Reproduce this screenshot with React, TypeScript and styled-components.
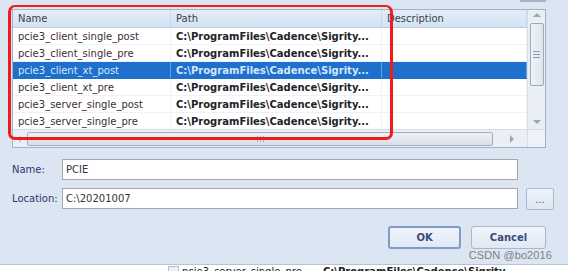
import React from 'react';
import styled, { createGlobalStyle } from 'styled-components';

const GlobalStyle = createGlobalStyle`
  html, body {
    margin: 0;
    padding: 0;
    background: #ffffff;
    overflow: hidden;
  }
  body {
    font-family: "DejaVu Sans", Tahoma, sans-serif;
  }
`;

const Screen = styled.div`
  width: 568px;
  height: 271px;
  overflow: hidden;
  display: flex;
  flex-direction: column;
`;

const Dialog = styled.div`
  position: relative;
  height: 265px;
  flex-shrink: 0;
  background: #dce6f2;
  border-bottom: 1px solid #b4c3d6;
  box-sizing: border-box;
  padding: 0 22px 0 12px;
  display: flex;
  flex-direction: column;
`;

const TopStrip = styled.div`
  height: 9px;
  display: flex;
  justify-content: flex-end;
`;

const TopButtonEdge = styled.div`
  width: 26px;
  height: 2px;
  background: #a9b2bf;
`;

const ListBox = styled.div`
  height: 139px;
  border: 1px solid #9fb3ca;
  box-sizing: border-box;
  background: #ffffff;
  display: grid;
  grid-template-columns: 1fr 18px;
  grid-template-rows: 1fr 18px;
`;

const Table = styled.div`
  display: flex;
  flex-direction: column;
  overflow: hidden;
`;

const Row = styled.div<{ $header?: boolean; $selected?: boolean }>`
  display: grid;
  grid-template-columns: 158px 211px 1fr;
  height: ${({ $header }) => ($header ? '18px' : '17px')};
  box-sizing: border-box;
  flex-shrink: 0;
  background: ${({ $header, $selected }) =>
    $header
      ? 'linear-gradient(#e3edf8, #d4e2f3)'
      : $selected
      ? '#1f6fcd'
      : '#ffffff'};
  border-bottom: 1px solid
    ${({ $header, $selected }) =>
      $header ? '#bccbdd' : $selected ? '#1f6fcd' : '#eef1f5'};
`;

const Cell = styled.div<{ $bold?: boolean; $header?: boolean; $selected?: boolean }>`
  display: flex;
  align-items: center;
  padding-left: 5px;
  font-size: 10px;
  font-weight: ${({ $bold }) => ($bold ? 700 : 400)};
  white-space: nowrap;
  overflow: hidden;
  color: ${({ $header, $selected, $bold }) =>
    $selected ? '#d6e6fa' : $header ? '#3b3f4c' : $bold ? '#222226' : '#3d2e35'};
  border-right: 1px solid
    ${({ $header, $selected }) =>
      $header ? '#c6d5e7' : $selected ? '#6e9fdc' : '#f1f3f6'};
`;

const VScroll = styled.div`
  background: #eaeff6;
  border-left: 1px solid #d3dce8;
  display: flex;
  flex-direction: column;
  align-items: center;
  padding-top: 3px;
  padding-bottom: 5px;
`;

const HScroll = styled.div`
  background: #eaeff6;
  border-top: 1px solid #d3dce8;
  display: flex;
  align-items: center;
  padding: 0 2px 0 4px;
  gap: 6px;
`;

const Corner = styled.div`
  background: #eef2f7;
  border-top: 1px solid #d3dce8;
  border-left: 1px solid #d3dce8;
`;

const Arrow = styled.div<{ $dir: 'up' | 'down' | 'left' | 'right' }>`
  width: 0;
  height: 0;
  flex-shrink: 0;
  border: 4px solid transparent;
  ${({ $dir }) =>
    $dir === 'up'
      ? 'border-bottom-color: #98a6b8; border-top-width: 0;'
      : $dir === 'down'
      ? 'border-top-color: #98a6b8; border-bottom-width: 0;'
      : $dir === 'left'
      ? 'border-right-color: #c0c8d2; border-left-width: 0;'
      : 'border-left-color: #98a6b8; border-right-width: 0;'}
`;

const VThumb = styled.div`
  width: 14px;
  height: 63px;
  margin-top: 6px;
  box-sizing: border-box;
  border: 1px solid #9eabbb;
  border-radius: 2px;
  background: linear-gradient(90deg, #f1f4f8, #dfe5ed);
  display: flex;
  flex-direction: column;
  align-items: center;
  justify-content: center;
  gap: 2px;
`;

const VGrip = styled.div`
  width: 7px;
  height: 1px;
  background: #8d9aab;
`;

const VSpacer = styled.div`
  flex: 1;
`;

const HThumb = styled.div`
  flex: 1;
  height: 14px;
  box-sizing: border-box;
  border: 1px solid #a2aebd;
  border-radius: 2px;
  background: linear-gradient(#eef1f5, #d9dfe7);
  display: flex;
  align-items: center;
  justify-content: center;
  gap: 2px;
`;

const HGrip = styled.div`
  width: 1px;
  height: 6px;
  background: #a5b0bd;
`;

const HTrackEnd = styled.div`
  width: 26px;
  display: flex;
  justify-content: center;
`;

const Fields = styled.div`
  margin-top: 11px;
  display: grid;
  grid-template-columns: 50px 448px 28px;
  column-gap: 8px;
  row-gap: 7px;
  align-items: center;
`;

const Label = styled.label`
  font-size: 10px;
  color: #2b3873;
  margin-right: -8px;
`;

const Input = styled.div`
  height: 21px;
  box-sizing: border-box;
  border: 1px solid #a4a6aa;
  background: #ffffff;
  display: flex;
  align-items: center;
  padding-left: 3px;
  font-size: 10px;
  color: #34343a;
  margin-left: -8px;
  width: 456px;
`;

const BrowseButton = styled.div`
  height: 22px;
  box-sizing: border-box;
  border: 1px solid #a8b8cd;
  border-radius: 2px;
  background: linear-gradient(#eef3fa, #dde7f3);
  display: flex;
  align-items: center;
  justify-content: center;
  font-size: 10px;
  color: #4a5a80;
  margin-top: 1px;
`;

const Buttons = styled.div`
  margin-top: 16px;
  display: flex;
  justify-content: flex-end;
  gap: 10px;
`;

const DialogButton = styled.div<{ $default?: boolean; $width: number }>`
  width: ${({ $width }) => $width}px;
  height: 23px;
  box-sizing: border-box;
  border: ${({ $default }) => ($default ? '2px solid #7f9cc6' : '1px solid #a9b8cc')};
  border-radius: 3px;
  background: linear-gradient(#f1f5fb, #dfe8f4);
  display: flex;
  align-items: center;
  justify-content: center;
  font-size: 10px;
  font-weight: 700;
  color: #3b4a7a;
`;

const Watermark = styled.div`
  position: absolute;
  right: 16px;
  bottom: 3px;
  font-family: "Liberation Sans", Arial, sans-serif;
  font-size: 11px;
  color: #808080;
  letter-spacing: 0.1px;
`;

const Annotation = styled.div`
  position: absolute;
  left: 8px;
  top: 5px;
  width: 385px;
  height: 135px;
  box-sizing: border-box;
  border: 3px solid #f01b1b;
  border-top-width: 2px;
  border-radius: 7px;
  pointer-events: none;
`;

const BehindList = styled.div`
  flex: 1;
  display: flex;
  align-items: flex-start;
  padding-left: 168px;
  gap: 3px;
  overflow: hidden;
`;

const BehindIcon = styled.div`
  width: 11px;
  height: 8px;
  margin-top: 1px;
  box-sizing: border-box;
  border: 1px solid #b7bec8;
  border-bottom: none;
  background: #eef1f5;
`;

const BehindText = styled.div<{ $bold?: boolean; $width?: number }>`
  font-size: 10px;
  line-height: 12px;
  margin-top: 1px;
  font-weight: ${({ $bold }) => ($bold ? 700 : 400)};
  color: #222;
  white-space: nowrap;
  width: ${({ $width }) => ($width ? `${$width}px` : 'auto')};
`;

const rows = [
  'pcie3_client_single_post',
  'pcie3_client_single_pre',
  'pcie3_client_xt_post',
  'pcie3_client_xt_pre',
  'pcie3_server_single_post',
  'pcie3_server_single_pre',
];

const PATH = 'C:\\ProgramFiles\\Cadence\\Sigrity...';

export default function App() {
  return (
    <Screen>
      <GlobalStyle />
      <Dialog>
        <TopStrip>
          <TopButtonEdge />
        </TopStrip>

        <ListBox>
          <Table>
            <Row $header>
              <Cell $header>Name</Cell>
              <Cell $header>Path</Cell>
              <Cell $header>Description</Cell>
            </Row>
            {rows.map((name) => {
              const selected = name === 'pcie3_client_xt_post';
              return (
                <Row key={name} $selected={selected}>
                  <Cell $selected={selected}>{name}</Cell>
                  <Cell $bold $selected={selected}>{PATH}</Cell>
                  <Cell $selected={selected} />
                </Row>
              );
            })}
          </Table>
          <VScroll>
            <Arrow $dir="up" />
            <VThumb>
              <VGrip />
              <VGrip />
              <VGrip />
            </VThumb>
            <VSpacer />
            <Arrow $dir="down" />
          </VScroll>
          <HScroll>
            <Arrow $dir="left" />
            <HThumb>
              <HGrip />
              <HGrip />
              <HGrip />
            </HThumb>
            <HTrackEnd>
              <Arrow $dir="right" />
            </HTrackEnd>
          </HScroll>
          <Corner />
        </ListBox>

        <Fields>
          <Label>Name:</Label>
          <Input>PCIE</Input>
          <span />
          <Label>Location:</Label>
          <Input>C:\20201007</Input>
          <BrowseButton>...</BrowseButton>
        </Fields>

        <Buttons>
          <DialogButton $default $width={73}>OK</DialogButton>
          <DialogButton $width={75}>Cancel</DialogButton>
        </Buttons>

        <Watermark>CSDN @bo2016</Watermark>
        <Annotation />
      </Dialog>

      <BehindList>
        <BehindIcon />
        <BehindText $width={138}>pcie3_server_single_pre</BehindText>
        <BehindText $bold>C:\ProgramFiles\Cadence\Sigrity</BehindText>
      </BehindList>
    </Screen>
  );
}
